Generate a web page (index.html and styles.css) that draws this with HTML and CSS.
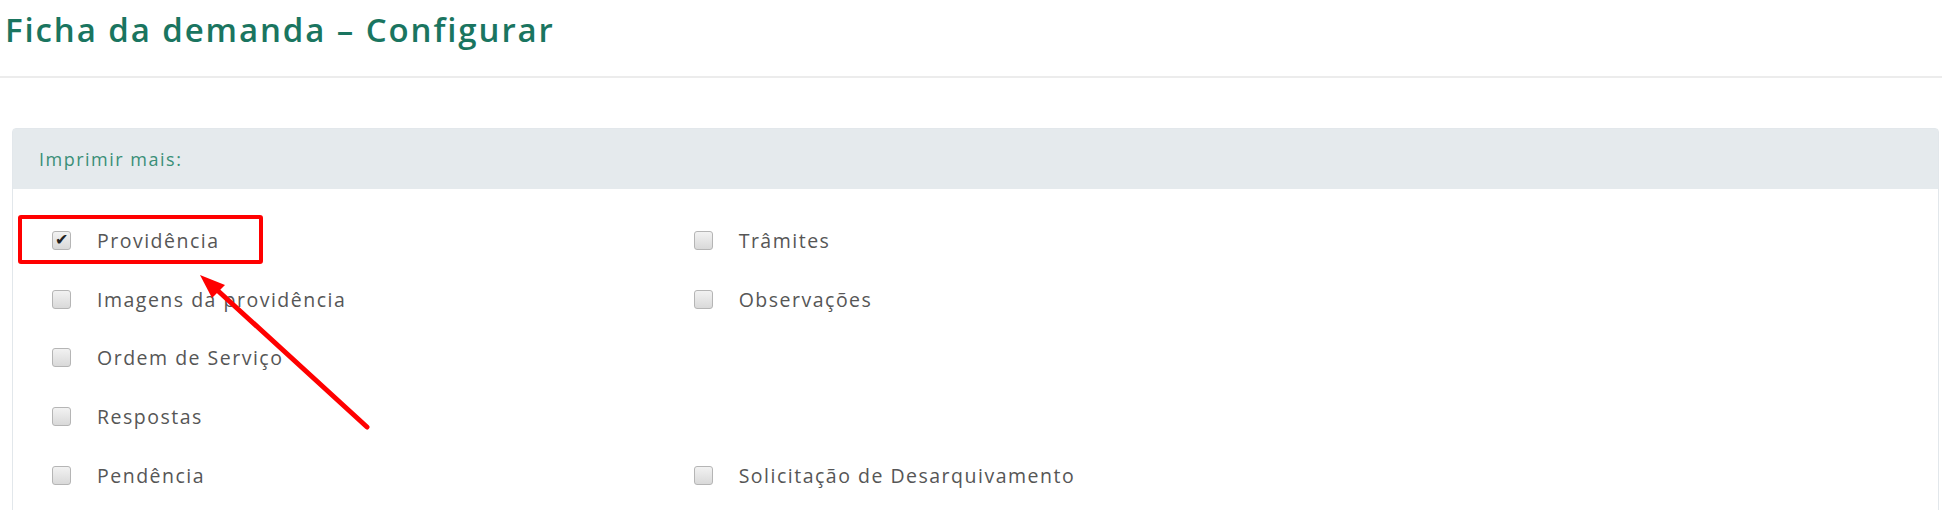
FILE: index.html
```html
<!DOCTYPE html>
<html lang="pt-BR">
<head>
    <meta charset="UTF-8">
    <meta name="viewport" content="width=device-width, initial-scale=1.0">
    <title>Ficha da demanda - Configurar</title>
    <link rel="stylesheet" href="styles.css">
</head>
<body>
    <h1 class="page-title">Ficha da demanda &ndash; Configurar</h1>

    <div class="panel">
        <div class="panel-header">Imprimir mais:</div>
        <div class="panel-body">
            <div class="options">
                <label class="option"><span class="box checked"></span>Providência</label>
                <label class="option"><span class="box"></span>Trâmites</label>
                <span></span>
                <label class="option"><span class="box"></span>Imagens da providência</label>
                <label class="option"><span class="box"></span>Observações</label>
                <span></span>
                <label class="option"><span class="box"></span>Ordem de Serviço</label>
                <span></span>
                <span></span>
                <label class="option"><span class="box"></span>Respostas</label>
                <span></span>
                <span></span>
                <label class="option"><span class="box"></span>Pendência</label>
                <label class="option"><span class="box"></span>Solicitação de Desarquivamento</label>
                <span></span>
            </div>
        </div>
    </div>

    <!-- destaque em vermelho -->
    <div class="highlight"></div>
    <svg class="arrow" width="420" height="460" viewBox="0 0 420 460">
        <line x1="367" y1="427" x2="216" y2="289" stroke="#ff0000" stroke-width="5" stroke-linecap="round"/>
        <polygon points="200,275 225,285 212,298" fill="#ff0000"/>
    </svg>
</body>
</html>
```

FILE: styles.css
```css
body {
    margin: 0;
    font-family: "Open Sans", Arial, sans-serif;
    background: #fff;
    position: relative;
}
.page-title {
    margin: 0;
    padding: 8px 0 0 5px;
    height: 78px;
    box-sizing: border-box;
    font-size: 33px;
    line-height: 44px;
    font-weight: 600;
    letter-spacing: 1.9px;
    color: #1a7560;
    border-bottom: 2px solid #ececec;
}
.panel {
    margin: 50px 3px 0 12px;
    border: 1px solid #e2e7eb;
    border-radius: 4px 4px 0 0;
}
.panel-header {
    height: 60px;
    box-sizing: border-box;
    padding: 0 0 0 26px;
    display: flex;
    align-items: center;
    background-color: #e5eaed;
    color: #3a8f78;
    font-size: 18px;
    letter-spacing: 1.5px;
}
.panel-body {
    padding: 22px 0 40px 0;
}
.options {
    display: grid;
    grid-template-columns: repeat(3, 1fr);
    grid-auto-rows: 58.8px;
}
.option {
    display: flex;
    align-items: center;
    padding-left: 39px;
    color: #565656;
    font-size: 19.5px;
    letter-spacing: 1.5px;
}
.box {
    width: 19px;
    height: 19px;
    margin-right: 26px;
    border: 1px solid #b5b5b5;
    border-radius: 3px;
    background: linear-gradient(#f2f2f2, #d9d9d9);
    box-sizing: border-box;
    position: relative;
}
.box.checked::after {
    content: "\2714";
    position: absolute;
    left: 2px;
    top: -4px;
    font-size: 16px;
    color: #222;
    letter-spacing: 0;
}
.highlight {
    position: absolute;
    left: 18px;
    top: 215px;
    width: 245px;
    height: 49px;
    box-sizing: border-box;
    border: 4px solid #ff0000;
    border-radius: 3px;
}
.arrow {
    position: absolute;
    left: 0;
    top: 0;
}
```
